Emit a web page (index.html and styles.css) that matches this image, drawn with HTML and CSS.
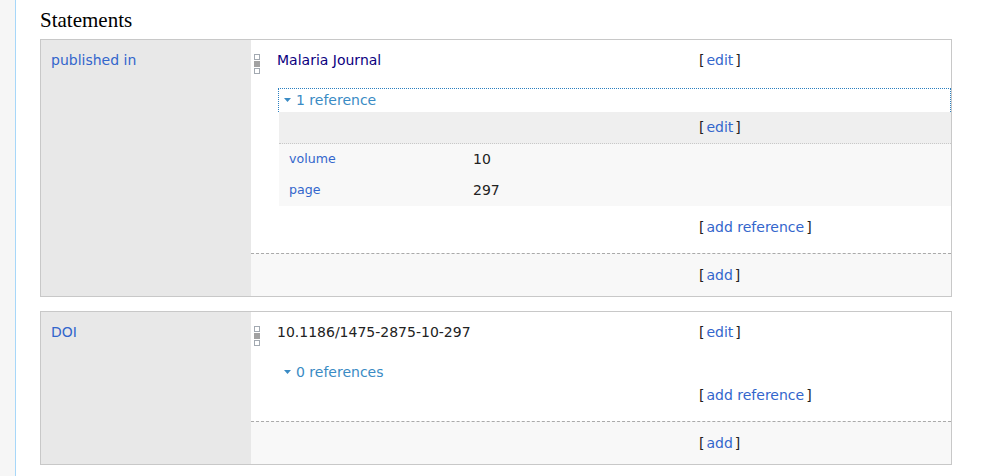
FILE: index.html
```html
<!DOCTYPE html>
<html lang="en">
<head>
<meta charset="utf-8">
<title>Statements</title>
<link rel="stylesheet" href="styles.css">
</head>
<body>
<div class="page">
  <div class="sidebar"></div>
  <div class="content">
    <h2 class="heading">Statements</h2>

    <div class="group">
      <div class="prop"><a class="link" href="#">published in</a></div>
      <div class="statements">
        <div class="statement">
          <div class="mainsnak">
            <svg class="handle" width="6" height="20" viewBox="0 0 6 20"><rect x="0.5" y="0.5" width="5" height="5" fill="#fff" stroke="#a2a9b1"/><rect x="0" y="7" width="6" height="6" fill="#a2a2a2"/><rect x="0.5" y="14.5" width="5" height="5" fill="#fff" stroke="#a2a9b1"/></svg>
            <div class="value"><a class="link visited" href="#">Malaria Journal</a></div>
            <div class="toolbar"><span class="br">[</span><a class="link tb-link" href="#">edit</a><span class="br">]</span></div>
          </div>
          <div class="refs-heading focused">
            <svg class="arrow" width="7" height="4" viewBox="0 0 7 4"><polygon points="0,0 7,0 3.5,4" fill="#3a8bc4"/></svg>
            <span>1 reference</span>
          </div>
          <div class="ref">
            <div class="ref-toolbar-row">
              <div class="toolbar"><span class="br">[</span><a class="link tb-link" href="#">edit</a><span class="br">]</span></div>
            </div>
            <div class="snaks">
              <div class="snak"><div class="snak-key"><a class="link" href="#">volume</a></div><div class="snak-value">10</div></div>
              <div class="snak"><div class="snak-key"><a class="link" href="#">page</a></div><div class="snak-value">297</div></div>
            </div>
          </div>
          <div class="addref-row">
            <div class="toolbar"><span class="br">[</span><a class="link tb-link" href="#">add reference</a><span class="br">]</span></div>
          </div>
        </div>
        <div class="add-row">
          <div class="toolbar"><span class="br">[</span><a class="link tb-link" href="#">add</a><span class="br">]</span></div>
        </div>
      </div>
    </div>

    <div class="group">
      <div class="prop"><a class="link" href="#">DOI</a></div>
      <div class="statements">
        <div class="statement">
          <div class="mainsnak">
            <svg class="handle" width="6" height="20" viewBox="0 0 6 20"><rect x="0.5" y="0.5" width="5" height="5" fill="#fff" stroke="#a2a9b1"/><rect x="0" y="7" width="6" height="6" fill="#a2a2a2"/><rect x="0.5" y="14.5" width="5" height="5" fill="#fff" stroke="#a2a9b1"/></svg>
            <div class="value">10.1186/1475-2875-10-297</div>
            <div class="toolbar"><span class="br">[</span><a class="link tb-link" href="#">edit</a><span class="br">]</span></div>
          </div>
          <div class="refs-heading">
            <svg class="arrow" width="7" height="4" viewBox="0 0 7 4"><polygon points="0,0 7,0 3.5,4" fill="#3a8bc4"/></svg>
            <span>0 references</span>
          </div>
          <div class="addref-row">
            <div class="toolbar"><span class="br">[</span><a class="link tb-link" href="#">add reference</a><span class="br">]</span></div>
          </div>
        </div>
        <div class="add-row">
          <div class="toolbar"><span class="br">[</span><a class="link tb-link" href="#">add</a><span class="br">]</span></div>
        </div>
      </div>
    </div>
  </div>
</div>
</body>
</html>
```

FILE: styles.css
```css
html, body {
  margin: 0;
  padding: 0;
}

body {
  font-family: "DejaVu Sans", sans-serif;
  font-size: 14px;
  line-height: 20px;
  color: #222;
  background: #fff;
}

.page {
  display: flex;
  min-height: 100vh;
}

.sidebar {
  flex: none;
  width: 15px;
  background: #f6f6f6;
  border-right: 1px solid #a7d7f9;
}

.content {
  flex: 1;
  padding: 8px 33px 0 24px;
}

.heading {
  font-family: "Liberation Serif", serif;
  font-size: 21px;
  line-height: 24px;
  font-weight: normal;
  color: #000;
  margin: 0 0 7px;
}

.link {
  color: #3366cc;
  text-decoration: none;
}

.link.visited {
  color: #0b0080;
}

.group {
  display: flex;
  border: 1px solid #c8c8c8;
  margin-bottom: 14px;
}

.prop {
  flex: none;
  width: 210px;
  box-sizing: border-box;
  padding: 10px;
  background: #e8e8e8;
}

.statements {
  flex: 1;
  display: flex;
  flex-direction: column;
  min-width: 0;
}

.mainsnak {
  display: flex;
  align-items: flex-start;
  height: 48px;
  padding-left: 3px;
}

.handle {
  flex: none;
  display: block;
  margin-top: 14px;
}

.value {
  flex: 1;
  margin-left: 17px;
  padding-top: 10px;
}

.toolbar {
  flex: none;
  width: 252px;
  box-sizing: border-box;
}

.mainsnak .toolbar {
  padding-top: 10px;
}

.br {
  color: #222;
}

.tb-link {
  padding: 0 2px;
}

.refs-heading {
  display: flex;
  align-items: center;
  margin-left: 27px;
  padding: 1px 0 2px 5px;
  border-width: 1px 1px 0 1px;
  border-style: solid;
  border-color: transparent;
  color: #3a8bc4;
}

.refs-heading.focused {
  border-color: #2a7fc0;
  border-style: dotted dotted none dotted;
}

.arrow {
  flex: none;
  display: block;
  margin-right: 5px;
}

.ref {
  margin-left: 28px;
  margin-bottom: 10px;
}

.ref-toolbar-row {
  display: flex;
  justify-content: flex-end;
  padding: 5px 0 6px;
  background: #efefef;
  border-bottom: 1px dotted #c8c8c8;
}

.snaks {
  background: #f8f8f8;
}

.snak {
  display: flex;
  align-items: flex-start;
  padding: 5px 0 6px;
}

.snak-key {
  flex: none;
  width: 194px;
  box-sizing: border-box;
  padding-left: 10px;
  font-size: 12.6px;
}

.snak-value {
  flex: 1;
}

.addref-row {
  display: flex;
  justify-content: flex-end;
  padding: 1px 0 16px;
}

.add-row {
  display: flex;
  justify-content: flex-end;
  padding: 11px 0;
  background: #f8f8f8;
  border-top: 1px dashed #aaa;
}
```
